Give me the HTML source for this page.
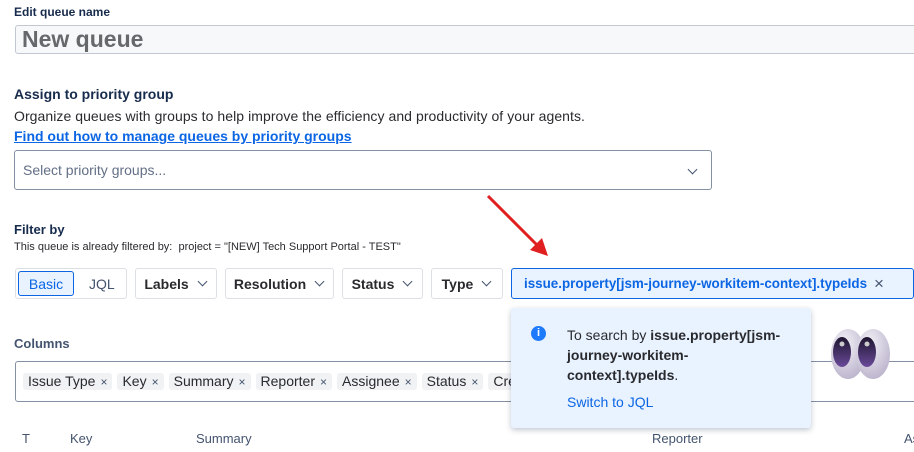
<!DOCTYPE html>
<html><head><meta charset="utf-8"><style>
body{margin:0;width:914px;height:452px;overflow:hidden;background:#fff;font-family:"Liberation Sans",sans-serif;color:#172b4d;position:relative}
.a{position:absolute;white-space:nowrap}
.btn{position:absolute;top:268px;height:31px;border:1px solid #dcdfe4;border-radius:3px;box-sizing:border-box;font-size:14px;font-weight:bold;color:#292a2e;display:flex;align-items:center;justify-content:center;background:#fff}
.chev{display:inline-block;width:6px;height:6px;border-right:1.5px solid #44546f;border-bottom:1.5px solid #44546f;transform:rotate(45deg);margin:-4px 2px 0 10px}
.chip{display:inline-block;background:#f1f2f4;border-radius:3px;font-size:14px;color:#292a2e;padding:0 5px;height:17px;line-height:17px;margin-right:5px}
.chip i{font-style:normal;font-size:12px;color:#44546f;margin-left:5px}
</style></head><body>
<div class="a" style="left:14px;top:5px;font-size:12px;font-weight:bold">Edit queue name</div>
<div class="a" style="left:15px;top:25px;width:910px;height:29px;background:#f7f8f9;border:1px solid #c1c7d0;border-radius:3px;box-sizing:border-box"></div>
<div class="a" style="left:22px;top:26px;font-size:23px;font-weight:bold;color:#67686b">New queue</div>
<div class="a" style="left:14px;top:86px;font-size:14px;font-weight:bold">Assign to priority group</div>
<div class="a" style="left:14px;top:108px;font-size:14px;color:#292a2e;letter-spacing:0.06px">Organize queues with groups to help improve the efficiency and productivity of your agents.</div>
<div class="a" style="left:14px;top:128px;font-size:14px;color:#0c66e4;text-decoration:underline;font-weight:bold">Find out how to manage queues by priority groups</div>
<div class="a" style="left:14px;top:150px;width:698px;height:40px;border:1px solid #8590a2;border-radius:3px;box-sizing:border-box"></div>
<div class="a" style="left:23px;top:162px;font-size:14px;color:#626f86">Select priority groups...</div>
<span class="chev a" style="left:689px;top:166px;margin:0"></span>
<div class="a" style="left:14px;top:222px;font-size:13px;font-weight:bold">Filter by</div>
<div class="a" style="left:14px;top:241px;font-size:11px;color:#292a2e">This queue is already filtered by:&nbsp; project = "[NEW] Tech Support Portal - TEST"</div>
<svg class="a" style="left:480px;top:188px" width="80" height="75"><line x1="8" y1="8" x2="62" y2="62" stroke="#e02020" stroke-width="3"/><polygon points="68,68 50,62 62,50" fill="#e02020"/></svg>
<div class="btn" style="left:15px;width:112px"></div>
<div class="btn" style="left:18px;top:271px;width:56px;height:25px;background:#e9f2ff;border-color:#0c66e4;color:#0c66e4;font-weight:normal">Basic</div>
<div class="a" style="left:89px;top:276px;font-size:14px;color:#44546f">JQL</div>
<div class="btn" style="left:135px;width:82px">Labels<span class="chev"></span></div>
<div class="btn" style="left:225px;width:109px">Resolution<span class="chev"></span></div>
<div class="btn" style="left:342px;width:81px">Status<span class="chev"></span></div>
<div class="btn" style="left:431px;width:72px">Type<span class="chev"></span></div>
<div class="btn" style="left:511px;width:403px;background:#e9f2ff;border-color:#0c66e4;color:#0c66e4;justify-content:flex-start;padding-left:12px;font-size:13.4px">issue.property[jsm-journey-workitem-context].typeIds<span style="color:#44546f;font-weight:normal;font-size:17px;margin-left:7px">×</span></div>
<div class="a" style="left:14px;top:336px;font-size:13px;font-weight:bold;color:#44546f">Columns</div>
<div class="a" style="left:15px;top:361px;width:910px;height:41px;border:1px solid #8590a2;border-radius:3px;box-sizing:border-box;padding:11px 0 0 7px"><span class="chip">Issue Type<i>×</i></span><span class="chip">Key<i>×</i></span><span class="chip">Summary<i>×</i></span><span class="chip">Reporter<i>×</i></span><span class="chip">Assignee<i>×</i></span><span class="chip">Status<i>×</i></span><span class="chip">Created</span></div>
<div class="a" style="left:22px;top:431px;font-size:13px;color:#44546f">T</div>
<div class="a" style="left:70px;top:431px;font-size:13px;color:#44546f">Key</div>
<div class="a" style="left:196px;top:431px;font-size:13px;color:#44546f">Summary</div>
<div class="a" style="left:652px;top:431px;font-size:13px;color:#44546f">Reporter</div>
<div class="a" style="left:904px;top:431px;font-size:13px;color:#44546f">As</div>
<div class="a" style="left:511px;top:308px;width:300px;height:120px;background:#e9f2ff;border-radius:3px;box-shadow:0 2px 6px rgba(9,30,66,.25)"></div>
<div class="a" style="left:531px;top:326px;width:15px;height:15px;border-radius:50%;background:#1d7afc;color:#fff;font-size:11px;font-weight:bold;text-align:center;line-height:15px">i</div>
<div class="a" style="left:567px;top:325px;font-size:14px;line-height:20px;color:#292a2e;white-space:normal;width:230px">To search by <b>issue.property[jsm-<br>journey-workitem-<br>context].typeIds</b>.</div>
<div class="a" style="left:567px;top:394px;font-size:14px;color:#0c66e4">Switch to JQL</div>
<svg class="a" style="left:828px;top:328px" width="66" height="52"><defs><radialGradient id="g" cx="40%" cy="30%" r="80%"><stop offset="0" stop-color="#f4f2f8"/><stop offset="1" stop-color="#b6aec8"/></radialGradient><linearGradient id="p" x1="0" y1="0" x2="0" y2="1"><stop offset="0" stop-color="#1e1630"/><stop offset="1" stop-color="#6a4a9a"/></linearGradient></defs><ellipse cx="20" cy="26" rx="17" ry="25" fill="url(#g)"/><ellipse cx="45" cy="26" rx="17" ry="25" fill="url(#g)"/><ellipse cx="14" cy="24" rx="9" ry="15" fill="url(#p)"/><ellipse cx="39" cy="24" rx="9" ry="15" fill="url(#p)"/><circle cx="14" cy="16" r="2.5" fill="#ccc"/><circle cx="39" cy="16" r="2.5" fill="#ccc"/></svg>
</body></html>
